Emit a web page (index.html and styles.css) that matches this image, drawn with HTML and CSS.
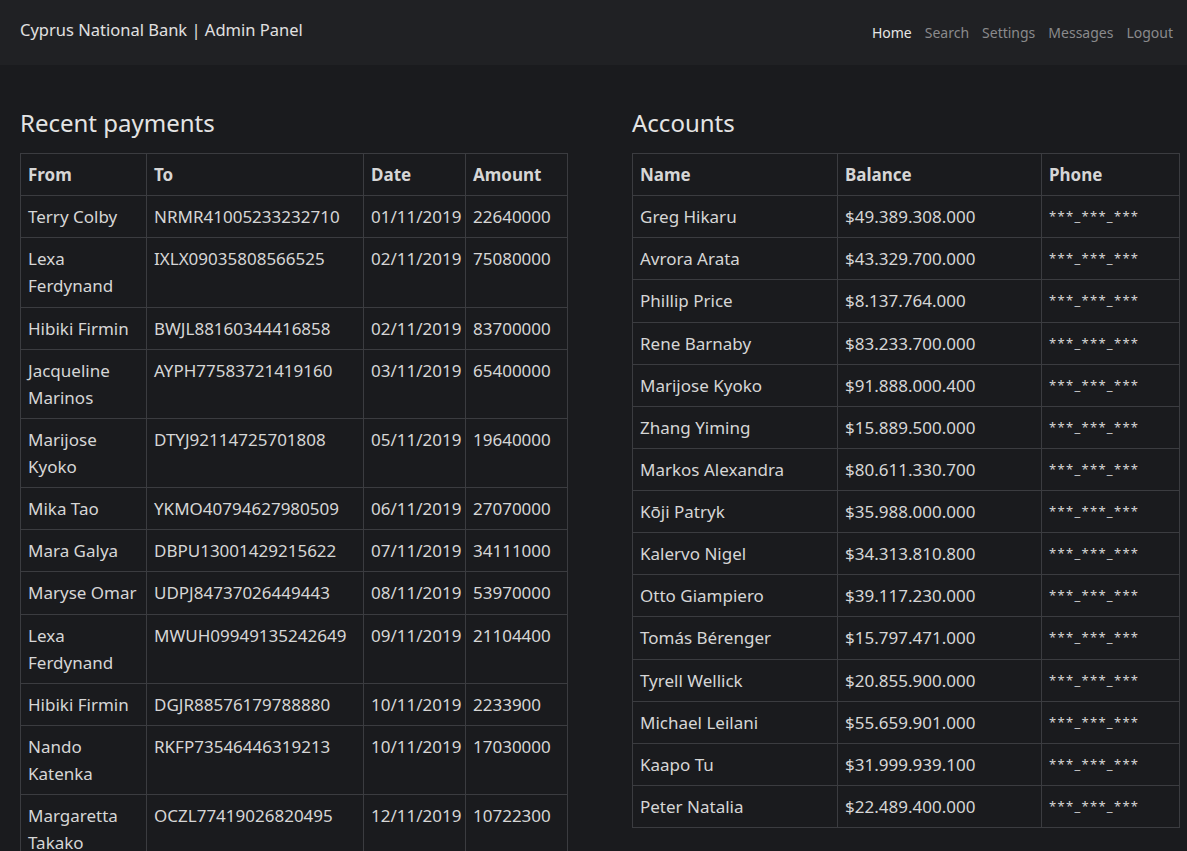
FILE: index.html
```html
<!DOCTYPE html>
<html lang="en">
<head>
<meta charset="utf-8">
<title>Cyprus National Bank | Admin Panel</title>
<link rel="stylesheet" href="styles.css">
</head>
<body>
<header class="navbar">
  <div class="brand">Cyprus National Bank | Admin Panel</div>
  <nav class="nav">
    <a class="nav-link active" href="#">Home</a>
    <a class="nav-link" href="#">Search</a>
    <a class="nav-link" href="#">Settings</a>
    <a class="nav-link" href="#">Messages</a>
    <a class="nav-link" href="#">Logout</a>
  </nav>
</header>
<main class="content">
  <section class="panel">
    <h2 class="panel-title">Recent payments</h2>
    <table class="data payments">
      <colgroup><col class="c-from"><col class="c-to"><col class="c-date"><col class="c-amount"></colgroup>
      <thead><tr><th>From</th><th>To</th><th>Date</th><th>Amount</th></tr></thead>
      <tbody>
        <tr><td>Terry Colby</td><td>NRMR41005233232710</td><td>01/11/2019</td><td>22640000</td></tr>
        <tr><td>Lexa Ferdynand</td><td>IXLX09035808566525</td><td>02/11/2019</td><td>75080000</td></tr>
        <tr><td>Hibiki Firmin</td><td>BWJL88160344416858</td><td>02/11/2019</td><td>83700000</td></tr>
        <tr><td>Jacqueline Marinos</td><td>AYPH77583721419160</td><td>03/11/2019</td><td>65400000</td></tr>
        <tr><td>Marijose Kyoko</td><td>DTYJ92114725701808</td><td>05/11/2019</td><td>19640000</td></tr>
        <tr><td>Mika Tao</td><td>YKMO40794627980509</td><td>06/11/2019</td><td>27070000</td></tr>
        <tr><td>Mara Galya</td><td>DBPU13001429215622</td><td>07/11/2019</td><td>34111000</td></tr>
        <tr><td>Maryse Omar</td><td>UDPJ84737026449443</td><td>08/11/2019</td><td>53970000</td></tr>
        <tr><td>Lexa Ferdynand</td><td>MWUH09949135242649</td><td>09/11/2019</td><td>21104400</td></tr>
        <tr><td>Hibiki Firmin</td><td>DGJR88576179788880</td><td>10/11/2019</td><td>2233900</td></tr>
        <tr><td>Nando Katenka</td><td>RKFP73546446319213</td><td>10/11/2019</td><td>17030000</td></tr>
        <tr><td>Margaretta Takako</td><td>OCZL77419026820495</td><td>12/11/2019</td><td>10722300</td></tr>
      </tbody>
    </table>
  </section>
  <section class="panel">
    <h2 class="panel-title">Accounts</h2>
    <table class="data accounts">
      <colgroup><col class="c-name"><col class="c-balance"><col class="c-phone"></colgroup>
      <thead><tr><th>Name</th><th>Balance</th><th>Phone</th></tr></thead>
      <tbody>
        <tr><td>Greg Hikaru</td><td>$49.389.308.000</td><td class="masked">***_***_***</td></tr>
        <tr><td>Avrora Arata</td><td>$43.329.700.000</td><td class="masked">***_***_***</td></tr>
        <tr><td>Phillip Price</td><td>$8.137.764.000</td><td class="masked">***_***_***</td></tr>
        <tr><td>Rene Barnaby</td><td>$83.233.700.000</td><td class="masked">***_***_***</td></tr>
        <tr><td>Marijose Kyoko</td><td>$91.888.000.400</td><td class="masked">***_***_***</td></tr>
        <tr><td>Zhang Yiming</td><td>$15.889.500.000</td><td class="masked">***_***_***</td></tr>
        <tr><td>Markos Alexandra</td><td>$80.611.330.700</td><td class="masked">***_***_***</td></tr>
        <tr><td>Kōji Patryk</td><td>$35.988.000.000</td><td class="masked">***_***_***</td></tr>
        <tr><td>Kalervo Nigel</td><td>$34.313.810.800</td><td class="masked">***_***_***</td></tr>
        <tr><td>Otto Giampiero</td><td>$39.117.230.000</td><td class="masked">***_***_***</td></tr>
        <tr><td>Tomás Bérenger</td><td>$15.797.471.000</td><td class="masked">***_***_***</td></tr>
        <tr><td>Tyrell Wellick</td><td>$20.855.900.000</td><td class="masked">***_***_***</td></tr>
        <tr><td>Michael Leilani</td><td>$55.659.901.000</td><td class="masked">***_***_***</td></tr>
        <tr><td>Kaapo Tu</td><td>$31.999.939.100</td><td class="masked">***_***_***</td></tr>
        <tr><td>Peter Natalia</td><td>$22.489.400.000</td><td class="masked">***_***_***</td></tr>
      </tbody>
    </table>
    <p class="more">Show all</p>
  </section>
</main>
</body>
</html>
```
FILE: styles.css
```css
html, body {
  margin: 0;
  padding: 0;
  background: #1a1b1e;
  color: #d4d4d4;
  font-family: "Noto Sans", "Open Sans", sans-serif;
}

.navbar {
  height: 65px;
  box-sizing: border-box;
  background: #202124;
  display: flex;
  align-items: flex-start;
  justify-content: space-between;
  padding: 18px 14px 0 20px;
}

.brand {
  font-size: 16.5px;
  line-height: 24px;
  color: #e0e0e0;
}

.nav {
  display: flex;
  gap: 13px;
  padding-top: 4px;
}

.nav-link {
  font-size: 14px;
  line-height: 22px;
  color: #8a8a8c;
  text-decoration: none;
}

.nav-link.active {
  color: #e6e6e6;
}

.content {
  display: grid;
  grid-template-columns: 1fr 1fr;
  column-gap: 64px;
  padding: 0 9px 0 20px;
}

.panel-title {
  font-size: 24px;
  font-weight: 400;
  line-height: 32px;
  color: #e4e4e4;
  margin: 42px 0 14px;
}

.data {
  width: 100%;
  border-collapse: collapse;
  table-layout: fixed;
  font-size: 17px;
  line-height: 27.12px;
}

.data th,
.data td {
  border: 1px solid #3b3c40;
  padding: 7px 7px;
  text-align: left;
  vertical-align: top;
  color: #d6d6d6;
}

.data th {
  font-weight: 700;
}

.c-from { width: 126px; }
.c-to { width: 217px; }
.c-date { width: 102px; }
.c-amount { width: 102px; }

.c-name { width: 205px; }
.c-balance { width: 204px; }
.c-phone { width: 138px; }

.data td.masked {
  font-size: 13px;
  letter-spacing: 1.3px;
}

.more {
  text-align: center;
  font-size: 17px;
  margin: 18px 0 0;
  color: #d6d6d6;
}
```
